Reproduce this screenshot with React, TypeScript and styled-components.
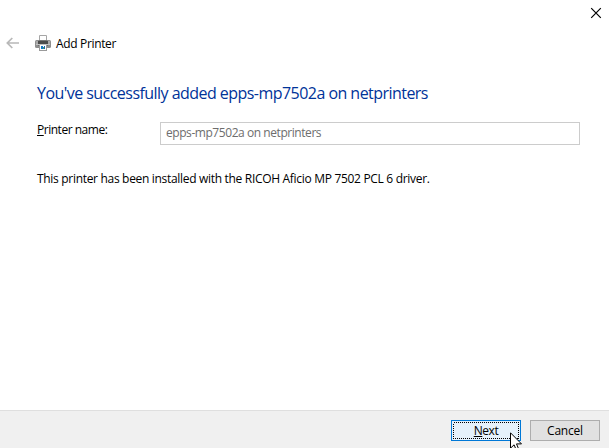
import React from "react";
import styled, { createGlobalStyle } from "styled-components";

const GlobalStyle = createGlobalStyle`
  *, *::before, *::after { box-sizing: border-box; }
  body { margin: 0; background: #fff; overflow: hidden; }
`;

const Dialog = styled.div`
  display: flex;
  flex-direction: column;
  width: 609px;
  height: 448px;
  background: #fff;
  color: #000;
  font: 12px/16px "Open Sans", "Noto Sans", sans-serif;
  letter-spacing: -0.31px;
  white-space: nowrap;
  overflow: hidden;
`;

const TitleBar = styled.div`
  display: flex;
  justify-content: flex-end;
  height: 32px;
  padding: 7px 7px 0 0;
`;

const CloseButton = styled.button`
  display: block;
  width: 12px;
  height: 12px;
  padding: 0;
  border: 0;
  background: none;
  svg { display: block; }
`;

const Header = styled.header`
  display: flex;
  height: 24px;
  padding-left: 6px;
`;

const BackIcon = styled.svg`
  width: 14px;
  height: 12px;
  margin: 5px 15px 0 0;
`;

const PrinterIcon = styled.svg`
  width: 18px;
  height: 16px;
  margin: 3px 3px 0 0;
`;

const WindowTitle = styled.span`
  margin-top: 4px;
  letter-spacing: -0.34px;
`;

const Content = styled.main`
  flex: 1;
  padding: 26px 29px 0 37px;
`;

const Heading = styled.h1`
  margin: 0;
  color: #003399;
  font-size: 16px;
  font-weight: 400;
  line-height: 22px;
  letter-spacing: -0.54px;
`;

const Field = styled.div`
  display: grid;
  grid-template-columns: 123px 1fr;
  margin-top: 18px;
`;

const Label = styled.div`
  letter-spacing: -0.48px;
`;

const NameBox = styled.div`
  height: 23px;
  padding: 2px 5px;
  border: 1px solid #ccc;
  color: #6d6d6d;
  letter-spacing: -0.44px;
`;

const Message = styled.p`
  margin: 26px 0 0;
`;

const Footer = styled.footer`
  display: flex;
  justify-content: flex-end;
  gap: 9px;
  height: 38px;
  padding: 9px 9px 0 0;
  border-top: 1px solid #dfdfdf;
  background: #f0f0f0;
`;

const Button = styled.button<{ $primary?: boolean }>`
  position: relative;
  width: 70px;
  height: 21px;
  padding: 0;
  border: 1px solid ${(p) => (p.$primary ? "#0078d7" : "#adadad")};
  background: ${(p) => (p.$primary ? "#e5f1fb" : "#e1e1e1")};
  color: #000;
  font: inherit;
  letter-spacing: ${(p) => (p.$primary ? "-0.45px" : "-0.2px")};
  line-height: 18px;
`;

const FocusRing = styled.svg`
  position: absolute;
  inset: 1px;
  width: 66px;
  height: 17px;
`;

const Cursor = styled.svg`
  position: absolute;
  left: 58px;
  top: 11px;
  width: 13px;
  height: 20px;
`;

export default function App() {
  return (
    <>
      <GlobalStyle />
      <Dialog>
        <TitleBar>
          <CloseButton aria-label="Close">
            <svg width="12" height="12" viewBox="0 0 12 12">
              <path d="M1.2 1.2 10.8 10.8M10.8 1.2 1.2 10.8" stroke="#000" strokeWidth="1.2" />
            </svg>
          </CloseButton>
        </TitleBar>
        <Header>
          <BackIcon viewBox="0 0 14 12" fill="none" stroke="#b8b8b8" strokeWidth="1.7">
            <path d="M13 6H1.5M6.3 1 1.3 6l5 5" />
          </BackIcon>
          <PrinterIcon viewBox="0 0 18 16">
            <path d="M4.5.5h7v6h-7z" fill="#fff" stroke="#a6a6a6" />
            <rect y="5" width="16" height="8" rx="1.5" fill="#8e8e8e" />
            <path d="M1 6h2v3H1zM13 6h2v3h-2z" fill="#a9a9a9" />
            <path d="M3 6h10v3H3z" fill="#4c4c4c" />
            <path d="M4 5h8v1H4z" fill="#777" />
            <path d="M1 9h14v1H1z" fill="#c2c2c2" />
            <path d="M3 10h10v1H3z" fill="#6d6d6d" />
            <path d="M4 10h8v6H4z" fill="#9a9a9a" />
            <path d="M5 10h6v5H5z" fill="#fff" />
            <path d="M6 11h2v3H6z" fill="#1776c8" />
            <path d="M8 12h1v2H8z" fill="#38a579" />
            <path d="M9 11h1v3H9z" fill="#255fa8" />
          </PrinterIcon>
          <WindowTitle>Add Printer</WindowTitle>
        </Header>
        <Content>
          <Heading>You've successfully added epps-mp7502a on netprinters</Heading>
          <Field>
            <Label><u>P</u>rinter name:</Label>
            <NameBox>epps-mp7502a on netprinters</NameBox>
          </Field>
          <Message>This printer has been installed with the RICOH Aficio MP 7502 PCL 6 driver.</Message>
        </Content>
        <Footer>
          <Button $primary>
            <FocusRing viewBox="0 0 66 17">
              <rect x=".5" y=".5" width="65" height="16" fill="none" stroke="#000" strokeDasharray="1 1" shapeRendering="crispEdges" />
            </FocusRing>
            <u>N</u>ext
            <Cursor viewBox="0 0 13 20">
              <path d="M.5.8v15.4l3.6-3.4 2.3 5.6 2.4-1-2.3-5.5h5z" fill="#fff" stroke="#000" />
            </Cursor>
          </Button>
          <Button>Cancel</Button>
        </Footer>
      </Dialog>
    </>
  );
}
